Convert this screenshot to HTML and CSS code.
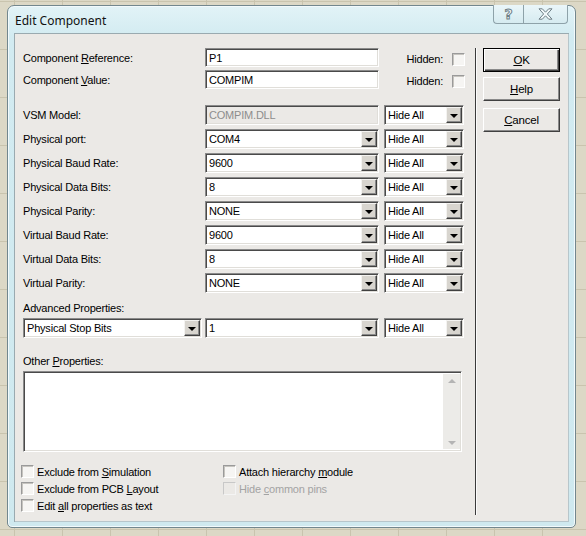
FILE: index.html
```html
<!DOCTYPE html>
<html>
<head>
<meta charset="utf-8">
<link rel="stylesheet" href="styles.css">
</head>
<body>
<div class="desktop">
  <div class="window">
    <div class="titlebar">
      <div class="title">Edit Component</div>
      <div class="tbtns">
        <div class="tb tb-help"><span class="qmark">?</span></div>
        <div class="tb tb-close">
          <svg width="15" height="12" viewBox="0 0 15 12"><polygon points="1,0.8 4.3,0.8 7.5,4.2 10.7,0.8 14,0.8 9.4,6 14,11.2 10.7,11.2 7.5,7.8 4.3,11.2 1,11.2 5.6,6" fill="#f3f9fb" stroke="#6e7f86" stroke-width="1" stroke-linejoin="round"/></svg>
        </div>
      </div>
    </div>
    <div class="client">
      <div class="main">
        <div class="row row-t">
          <div class="lbl">Component <u>R</u>eference:</div>
          <div class="field"><span class="val">P1</span></div>
          <div class="hid"><span>Hidden:</span><span class="cb"></span></div>
        </div>
        <div class="row row-t row-t2">
          <div class="lbl">Component <u>V</u>alue:</div>
          <div class="field"><span class="val">COMPIM</span></div>
          <div class="hid"><span>Hidden:</span><span class="cb"></span></div>
        </div>

        <div class="row row-c row-first">
          <div class="lbl">VSM Model:</div>
          <div class="field disabled"><span class="val">COMPIM.DLL</span></div>
          <div class="combo hide"><span class="val">Hide All</span><span class="arrow"></span></div>
        </div>
        <div class="row row-c">
          <div class="lbl">Physical port:</div>
          <div class="combo field"><span class="val">COM4</span><span class="arrow"></span></div>
          <div class="combo hide"><span class="val">Hide All</span><span class="arrow"></span></div>
        </div>
        <div class="row row-c">
          <div class="lbl">Physical Baud Rate:</div>
          <div class="combo field"><span class="val">9600</span><span class="arrow"></span></div>
          <div class="combo hide"><span class="val">Hide All</span><span class="arrow"></span></div>
        </div>
        <div class="row row-c">
          <div class="lbl">Physical Data Bits:</div>
          <div class="combo field"><span class="val">8</span><span class="arrow"></span></div>
          <div class="combo hide"><span class="val">Hide All</span><span class="arrow"></span></div>
        </div>
        <div class="row row-c">
          <div class="lbl">Physical Parity:</div>
          <div class="combo field"><span class="val">NONE</span><span class="arrow"></span></div>
          <div class="combo hide"><span class="val">Hide All</span><span class="arrow"></span></div>
        </div>
        <div class="row row-c">
          <div class="lbl">Virtual Baud Rate:</div>
          <div class="combo field"><span class="val">9600</span><span class="arrow"></span></div>
          <div class="combo hide"><span class="val">Hide All</span><span class="arrow"></span></div>
        </div>
        <div class="row row-c">
          <div class="lbl">Virtual Data Bits:</div>
          <div class="combo field"><span class="val">8</span><span class="arrow"></span></div>
          <div class="combo hide"><span class="val">Hide All</span><span class="arrow"></span></div>
        </div>
        <div class="row row-c">
          <div class="lbl">Virtual Parity:</div>
          <div class="combo field"><span class="val">NONE</span><span class="arrow"></span></div>
          <div class="combo hide"><span class="val">Hide All</span><span class="arrow"></span></div>
        </div>

        <div class="section-lbl adv">Advanced Properties:</div>
        <div class="row row-c row-adv">
          <div class="combo adv-name"><span class="val">Physical Stop Bits</span><span class="arrow"></span></div>
          <div class="combo field"><span class="val">1</span><span class="arrow"></span></div>
          <div class="combo hide"><span class="val">Hide All</span><span class="arrow"></span></div>
        </div>

        <div class="section-lbl other">Other <u>P</u>roperties:</div>
        <div class="textarea">
          <div class="ta-body"></div>
          <div class="scrollbar">
            <span class="sb-up"></span>
            <span class="sb-down"></span>
          </div>
        </div>

        <div class="checks">
          <div class="check-col">
            <div class="chk"><span class="cb"></span><span>Exclude from <u>S</u>imulation</span></div>
            <div class="chk"><span class="cb"></span><span>Exclude from PCB <u>L</u>ayout</span></div>
            <div class="chk"><span class="cb"></span><span>Edit <u>a</u>ll properties as text</span></div>
          </div>
          <div class="check-col col2">
            <div class="chk"><span class="cb"></span><span>Attach hierarchy <u>m</u>odule</span></div>
            <div class="chk disabled"><span class="cb"></span><span>Hide <u>c</u>ommon pins</span></div>
          </div>
        </div>
      </div>
      <div class="divider"></div>
      <div class="side">
        <div class="btn default"><span><u>O</u>K</span></div>
        <div class="btn"><span><u>H</u>elp</span></div>
        <div class="btn btn-cancel"><span><u>C</u>ancel</span></div>
      </div>
    </div>
  </div>
</div>
</body>
</html>
```

FILE: styles.css
```css
html, body {
  margin: 0;
  padding: 0;
}
body {
  width: 586px;
  height: 536px;
  overflow: hidden;
  font-family: "Liberation Sans", Arial, sans-serif;
  font-size: 11px;
  letter-spacing: -0.2px;
  color: #000;
}
.desktop {
  width: 586px;
  height: 536px;
  box-sizing: border-box;
  padding: 5px 0 0 7px;
  background-color: #dcd8c6;
  background-image:
    repeating-linear-gradient(90deg, transparent 0 14px, #c9c4ae 14px 15px, transparent 15px 48px),
    repeating-linear-gradient(0deg, transparent 0 6px, #c9c4ae 6px 7px, transparent 7px 48px);
}
.window {
  width: 569px;
  height: 523px;
  box-sizing: border-box;
  border: 1px solid #72878e;
  border-radius: 7px 7px 5px 5px;
  background: linear-gradient(180deg, #e2f3f7 0%, #d2ebf1 6%, #cfe9ef 100%);
  padding: 0 6px 5px 6px;
  display: flex;
  flex-direction: column;
  box-shadow: inset 0 0 0 1px #f2fafc;
}
.titlebar {
  height: 27px;
  display: flex;
  justify-content: space-between;
  align-items: flex-start;
}
.title {
  margin-top: 7px;
  padding-left: 1px;
  font-family: "Noto Sans", "Open Sans", sans-serif;
  font-size: 12px;
  letter-spacing: 0;
  line-height: 16px;
  color: #111;
}
.tbtns {
  display: flex;
  margin-right: 1px;
  margin-top: -1px;
}
.tb {
  height: 19px;
  box-sizing: border-box;
  border: 1px solid #8ea2a9;
  border-top: none;
  background: linear-gradient(180deg, #eaf6f9, #d6ebf0);
  display: flex;
  align-items: center;
  justify-content: center;
}
.tb-help {
  width: 30px;
  border-radius: 0 0 0 4px;
  border-right: none;
}
.tb-close {
  width: 45px;
  border-radius: 0 0 4px 0;
}
.qmark {
  font-family: "DejaVu Sans", sans-serif;
  font-weight: bold;
  font-size: 14px;
  color: #f3f9fb;
  -webkit-text-stroke: 1px #6e7f86;
  line-height: 14px;
}
.client {
  flex: 1;
  background: #ebe9e6;
  display: flex;
  box-shadow: inset 1px 1px 0 #9aaab0, inset -1px -1px 0 #b7c6cb;
}
.main {
  width: 461px;
  box-sizing: border-box;
  padding: 15px 0 0 9px;
  display: flex;
  flex-direction: column;
}
.divider {
  width: 1px;
  margin: 15px 0 7px 0;
  background: #3a3a3a;
  border-right: 1px solid #fbfbfb;
}
.side {
  flex: 1;
  padding: 15px 0 0 6px;
  display: flex;
  flex-direction: column;
}
.row {
  display: flex;
  align-items: center;
}
.row-t {
  height: 19px;
}
.row-t2 {
  margin-top: 3px;
}
.row-c {
  height: 20px;
  margin-top: 4px;
}
.row-first {
  margin-top: 16px;
}
.lbl {
  width: 182px;
  flex: none;
  white-space: nowrap;
}
.field, .combo, .textarea, .cb {
  box-sizing: border-box;
  border: 1px solid;
  border-color: #8a8a8a #ffffff #ffffff #8a8a8a;
  box-shadow: inset 1px 1px 0 #4a4a4a, inset -1px -1px 0 #e0ded9;
}
.field {
  width: 174px;
  height: 100%;
  flex: none;
  background: #fff;
  display: flex;
  align-items: center;
  position: relative;
}
.field.disabled {
  background: #ebe9e6;
  color: #8d8d8d;
}
.combo {
  height: 100%;
  background: #fff;
  display: flex;
  align-items: center;
  position: relative;
  flex: none;
}
.val {
  padding-left: 3px;
  white-space: nowrap;
  flex: 1;
}
.hide {
  width: 80px;
  margin-left: 5px;
}
.hid {
  width: 81px;
  margin-left: 5px;
  display: flex;
  align-items: center;
  justify-content: flex-end;
  gap: 9px;
  padding-top: 3px;
}
.cb {
  width: 13px;
  height: 13px;
  background: #f6f5f3;
  flex: none;
  box-shadow: inset 1px 1px 0 #c6c4bf;
  border-color: #9a9a9a #ffffff #ffffff #9a9a9a;
}
.arrow {
  width: 16px;
  height: 16px;
  margin-right: 1px;
  box-sizing: border-box;
  background: #d8d5cf;
  border: 1px solid;
  border-color: #f4f3f1 #404040 #404040 #f4f3f1;
  box-shadow: inset -1px -1px 0 #8a8a8a;
  display: flex;
  align-items: center;
  justify-content: center;
  flex: none;
}
.arrow::after {
  content: "";
  width: 0;
  height: 0;
  border-left: 4px solid transparent;
  border-right: 4px solid transparent;
  border-top: 4px solid #000;
  margin-top: 1px;
}
.section-lbl {
  height: 13px;
  line-height: 13px;
  white-space: nowrap;
}
.adv {
  margin-top: 9px;
}
.row-adv {
  margin-top: 3px;
}
.adv-name {
  width: 179px;
  margin-right: 3px;
}
.other {
  margin-top: 17px;
}
.textarea {
  margin-top: 3px;
  width: 439px;
  height: 81px;
  background: #fff;
  display: flex;
  padding: 2px 1px 2px 2px;
}
.ta-body {
  flex: 1;
}
.scrollbar {
  width: 17px;
  background: #ecebe8;
  display: flex;
  flex-direction: column;
  justify-content: space-between;
  align-items: center;
  padding: 5px 0 4px;
  box-sizing: border-box;
}
.sb-up, .sb-down {
  width: 0;
  height: 0;
  border-left: 4px solid transparent;
  border-right: 4px solid transparent;
}
.sb-up {
  border-bottom: 4px solid #b4b4b4;
}
.sb-down {
  border-top: 4px solid #b4b4b4;
}
.checks {
  margin-top: 11px;
  margin-left: -2px;
  display: flex;
}
.check-col {
  width: 202px;
  display: flex;
  flex-direction: column;
}
.chk {
  height: 17px;
  display: flex;
  align-items: center;
  gap: 3px;
  white-space: nowrap;
}
.chk.disabled {
  color: #a3a3a3;
}
.chk.disabled .cb {
  background: #ebe9e6;
  border-color: #c8c8c8 #f4f4f4 #f4f4f4 #c8c8c8;
  box-shadow: none;
}
.btn {
  width: 77px;
  height: 24px;
  box-sizing: border-box;
  background: #ebe9e6;
  border: 1px solid;
  border-color: #ffffff #404040 #404040 #ffffff;
  box-shadow: inset -1px -1px 0 #8a8a8a;
  display: flex;
  align-items: center;
  justify-content: center;
  margin-bottom: 5px;
  font-size: 11.5px;
}
.btn.default {
  border: 1px solid #000;
  box-shadow: inset 1px 1px 0 #ffffff, inset -1px -1px 0 #404040, inset -2px -2px 0 #8a8a8a;
}
.btn-cancel {
  margin-top: 2px;
}
```
